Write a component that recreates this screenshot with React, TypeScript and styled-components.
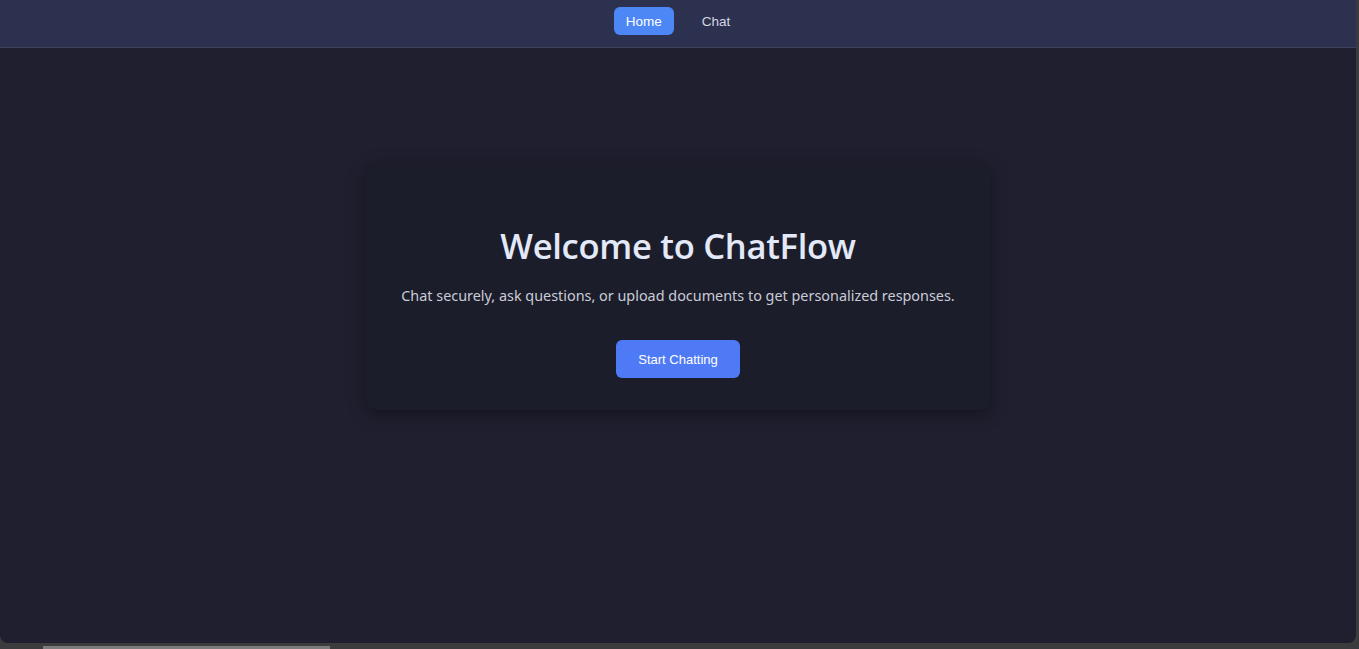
import React from "react";
import styled, { createGlobalStyle } from "styled-components";

const Global = createGlobalStyle`
  html, body { margin: 0; padding: 0; background: #3c3c3e; height: 100%; overflow: hidden; }
  #root { height: 100%; }
  * { box-sizing: border-box; }
`;

const Frame = styled.div`
  display: flex;
  flex-direction: column;
  height: 649px;
  width: 1359px;
`;

const Window = styled.div`
  display: flex;
  flex-direction: column;
  width: 1356px;
  height: 643px;
  background: #1f1f2f;
  border-bottom-left-radius: 8px;
  border-bottom-right-radius: 8px;
  overflow: hidden;
`;

const Header = styled.header`
  height: 48px;
  flex: none;
  background: #2c3150;
  border-bottom: 1px solid #3d4259;
  display: flex;
  justify-content: center;
  align-items: flex-start;
  padding-top: 7px;
  gap: 16px;
`;

const NavButton = styled.button<{ $active?: boolean }>`
  height: 28px;
  padding: 0 12px;
  border: none;
  border-radius: 6px;
  font-family: "Liberation Sans", Arial, sans-serif;
  font-size: 13.5px;
  font-weight: 400;
  color: ${(p) => (p.$active ? "#ffffff" : "#d4d6e2")};
  background: ${(p) => (p.$active ? "#4d87f6" : "transparent")};
  cursor: pointer;
`;

const Main = styled.main`
  flex: 1;
  display: flex;
  justify-content: center;
  align-items: flex-start;
  padding-top: 115px;
`;

const Card = styled.section`
  width: 624px;
  height: 247px;
  background: #1c1d2a;
  border-radius: 12px;
  box-shadow: 0 4px 18px rgba(0, 0, 0, 0.35);
  display: flex;
  flex-direction: column;
  align-items: center;
  padding-top: 60px;
`;

const Title = styled.h1`
  margin: 0;
  font-family: "Open Sans", "Noto Sans", sans-serif;
  font-weight: 600;
  font-size: 34.6px;
  line-height: 46px;
  color: #e3e9f8;
  letter-spacing: -0.3px;
`;

const Subtitle = styled.p`
  margin: 16px 0 0;
  font-family: "Noto Sans", "Open Sans", sans-serif;
  font-size: 14.4px;
  line-height: 22px;
  color: #c9ccd9;
`;

const PrimaryButton = styled.button`
  margin-top: 33px;
  width: 124px;
  height: 38px;
  border: none;
  border-radius: 6px;
  background: #4f7af6;
  color: #ffffff;
  font-family: "Liberation Sans", Arial, sans-serif;
  font-size: 13px;
  cursor: pointer;
`;

const BottomStrip = styled.div`
  flex: 1;
  display: flex;
  align-items: flex-end;
  padding-left: 43px;
`;

const TaskItem = styled.div`
  width: 287px;
  height: 3px;
  background: #7c7c7c;
`;

export default function App() {
  return (
    <>
      <Global />
      <Frame>
        <Window>
          <Header>
            <NavButton $active>Home</NavButton>
            <NavButton>Chat</NavButton>
          </Header>
          <Main>
            <Card>
              <Title>Welcome to ChatFlow</Title>
              <Subtitle>
                Chat securely, ask questions, or upload documents to get personalized responses.
              </Subtitle>
              <PrimaryButton>Start Chatting</PrimaryButton>
            </Card>
          </Main>
        </Window>
        <BottomStrip>
          <TaskItem />
        </BottomStrip>
      </Frame>
    </>
  );
}
